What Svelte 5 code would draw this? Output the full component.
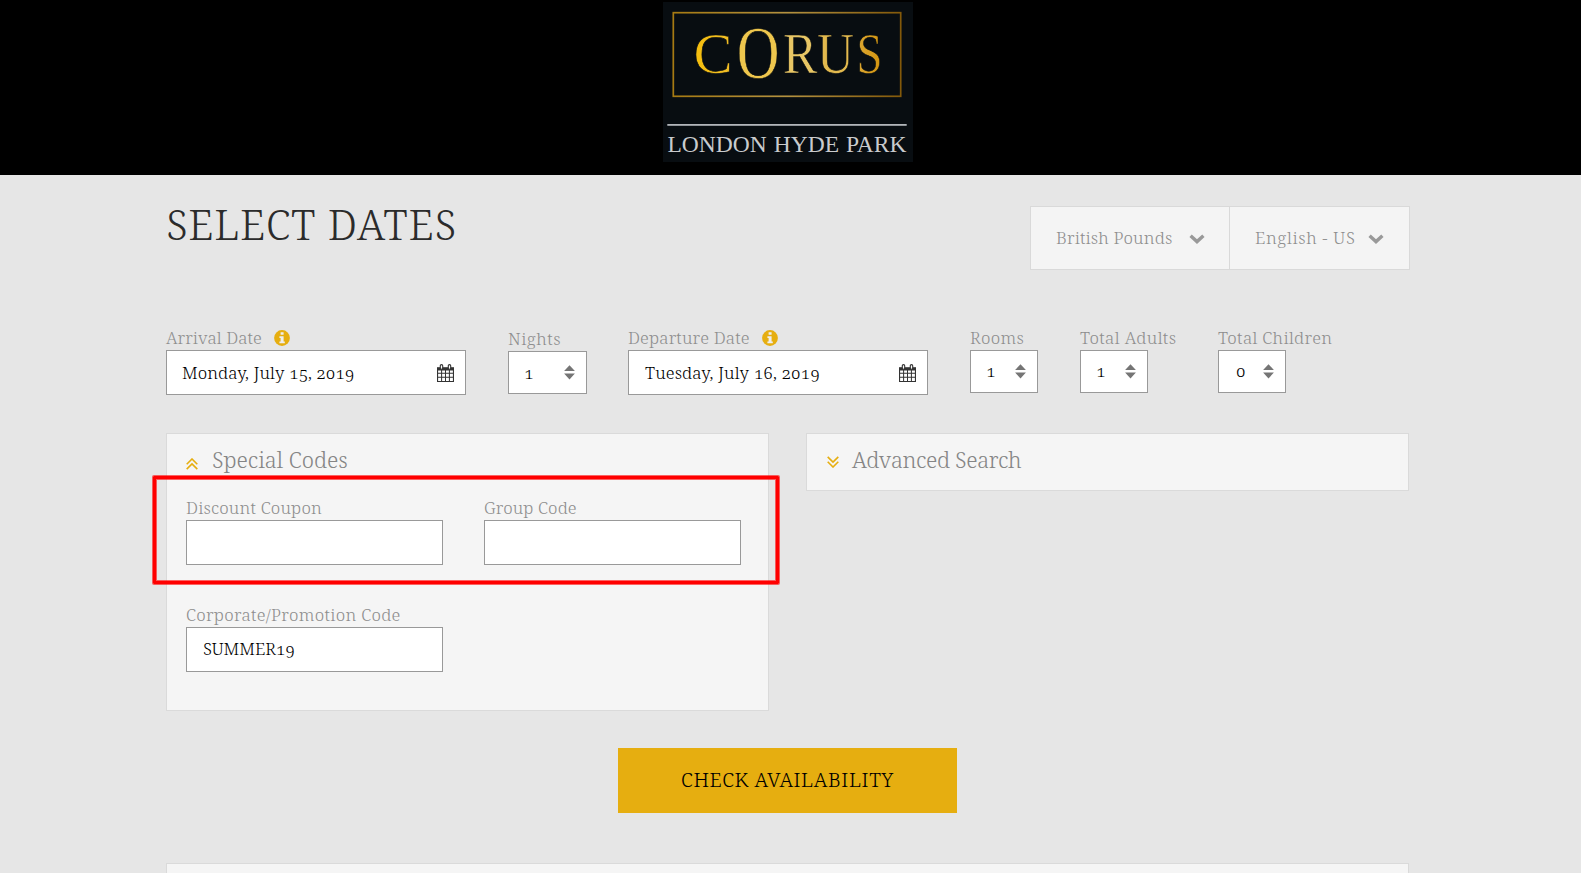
<script>
  const selectors = [
    { label: 'British Pounds', cls: 'currency' },
    { label: 'English - US', cls: 'language' }
  ];
  const fields = [
    { label: 'Arrival Date', value: 'Monday, July 15, 2019', kind: 'date', cls: 'arrival' },
    { label: 'Nights', value: '1', kind: 'step', cls: 'nights' },
    { label: 'Departure Date', value: 'Tuesday, July 16, 2019', kind: 'date', cls: 'departure' },
    { label: 'Rooms', value: '1', kind: 'step', cls: 'rooms' },
    { label: 'Total Adults', value: '1', kind: 'step', cls: 'adults' },
    { label: 'Total Children', value: '0', kind: 'step', cls: 'children' }
  ];
  const codes = [
    { label: 'Discount Coupon', value: '', cls: 'coupon' },
    { label: 'Group Code', value: '', cls: 'group' },
    { label: 'Corporate/Promotion Code', value: 'SUMMER19', cls: 'promo' }
  ];
</script>

<header>
  <svg class="logo" width="250" height="160" viewBox="0 0 250 160">
    <defs>
      <linearGradient id="frame">
        <stop offset="0" stop-color="#a67a12" />
        <stop offset=".5" stop-color="#b39140" />
        <stop offset="1" stop-color="#83590a" />
      </linearGradient>
      <linearGradient id="gold-c">
        <stop offset="0" stop-color="#f5be0c" />
        <stop offset="1" stop-color="#f0bd28" />
      </linearGradient>
      <linearGradient id="gold-s">
        <stop offset="0" stop-color="#dca834" />
        <stop offset="1" stop-color="#d3930c" />
      </linearGradient>
    </defs>
    <rect width="250" height="160" fill="#080d11" />
    <rect x="10.3" y="10.7" width="227.4" height="83.6" fill="none" stroke="url(#frame)" stroke-width="1.7" />
    <g class="brand" stroke="#080d11" stroke-width=".6">
      <text transform="translate(30.5 71) scale(1.03 1)" font-size="57" fill="url(#gold-c)">C</text>
      <text transform="translate(73.8 76.3) scale(.8 1)" font-size="74" fill="#eec64d">O</text>
      <text transform="translate(120 71) scale(.9 1)" font-size="57" fill="#e8c665">R</text>
      <text transform="translate(154 71) scale(.9 1)" font-size="57" fill="#e2b94e">U</text>
      <text transform="translate(193.5 71) scale(.82 1)" font-size="57" fill="url(#gold-s)">S</text>
    </g>
    <rect x="4.3" y="122" width="239.4" height="1.8" fill="#b1b5b9" />
    <text class="brand" x="4.5" y="150" font-size="23.5" word-spacing="1" fill="#c9cbcd" textLength="239" lengthAdjust="spacingAndGlyphs">LONDON HYDE PARK</text>
  </svg>
</header>

<main>
  <div class="top">
    <h1>SELECT DATES</h1>
    <div class="selectors">
      {#each selectors as s}
        <button class="selector {s.cls}">
          <span>{s.label}</span>
          <svg width="16" height="10" viewBox="0 0 16 10"><path d="M1.6 1.8 8 7.6l6.4-5.8" fill="none" stroke="#999" stroke-width="3.4" /></svg>
        </button>
      {/each}
    </div>
  </div>

  <div class="fields">
    {#each fields as f}
      <div class="field {f.cls}">
        <div class="label">
          <span>{f.label}</span>
          {#if f.kind === 'date'}
            <svg class="info" width="16" height="16" viewBox="0 0 16 16">
              <circle cx="8" cy="8" r="7.9" fill="#e6ae10" />
              <path d="M6.6 2.3h3v2.4h-3zM5.4 6.2h4.2v5.2h1.2v1.9H5.4v-1.9h1.2V8.1H5.4z" fill="#eee" />
            </svg>
          {/if}
        </div>
        <div class="box {f.kind}">
          <span>{f.value}</span>
          {#if f.kind === 'date'}
            <svg width="17" height="18" viewBox="0 0 17 18">
              <path d="M0 3.2h17V18H0z" fill="#333" />
              <path d="M1.1 6.4h3v2.4h-3zm4 0h2.9v2.4H5.1zm3.9 0h2.9v2.4H9zm3.9 0h3v2.4h-3zM1.1 9.8h3v2.9h-3zm4 0h2.9v2.9H5.1zm3.9 0h2.9v2.9H9zm3.9 0h3v2.9h-3zM1.1 13.7h3v3.2h-3zm4 0h2.9v3.2H5.1zm3.9 0h2.9v3.2H9zm3.9 0h3v3.2h-3z" fill="#fff" />
              <rect x="3.3" y=".6" width="2.4" height="4.6" rx="1.2" fill="#fff" stroke="#333" stroke-width="1.1" />
              <rect x="11.3" y=".6" width="2.4" height="4.6" rx="1.2" fill="#fff" stroke="#333" stroke-width="1.1" />
            </svg>
          {:else}
            <svg width="11" height="15" viewBox="0 0 11 15"><path d="M5.5.2 10.9 6H.1zM.1 8.6h10.8L5.5 14.4z" fill="#757575" /></svg>
          {/if}
        </div>
      </div>
    {/each}
  </div>

  <div class="panels">
    <section class="panel special">
      <h2>
        <svg width="12" height="12" viewBox="0 0 12 12"><path d="M.7 6.2 6 1l5.3 5.2M.7 11.1 6 5.9l5.3 5.2" /></svg>
        <span>Special Codes</span>
      </h2>
      <div class="codes">
        {#each codes as c}
          <div class="field {c.cls}">
            <div class="label"><span>{c.label}</span></div>
            <div class="box"><span>{c.value}</span></div>
          </div>
        {/each}
      </div>
      <div class="highlight"></div>
    </section>
    <section class="panel advanced">
      <h2>
        <svg width="12" height="12" viewBox="0 0 12 12"><path d="M.7.9 6 6.1 11.3.9M.7 5.8 6 11l5.3-5.2" /></svg>
        <span>Advanced Search</span>
      </h2>
    </section>
  </div>

  <button class="check">CHECK AVAILABILITY</button>
  <section class="panel results"></section>
</main>

<style>
  :global(body) {
    background: #e6e6e6;
    overflow: hidden;
  }
  :global(#app) {
    font-family: 'Noto Serif', 'DejaVu Serif Condensed', 'DejaVu Serif', serif;
    font-weight: 300;
    font-size: 17px;
    font-variant-numeric: oldstyle-nums;
  }
  header {
    height: 175px;
    background: #000;
    display: flex;
    justify-content: center;
    align-items: flex-start;
    padding: 2px 5px 0 0;
    box-sizing: border-box;
  }
  svg {
    display: block;
    flex: none;
  }
  .brand {
    font-family: 'Liberation Serif', serif;
    font-weight: 400;
  }
  main {
    height: 698px;
    padding: 0 172px 0 166px;
    box-sizing: border-box;
    overflow: hidden;
  }
  .top {
    height: 151px;
    display: flex;
    justify-content: space-between;
    align-items: flex-start;
  }
  h1 {
    margin: 22px 0 0;
    font-size: 41.5px;
    line-height: 54px;
    font-weight: 300;
    letter-spacing: 0.75px;
    color: #2b2b2b;
  }
  .selectors {
    display: flex;
    margin: 31px -1px 0 0;
    border: 1px solid #d9d9d9;
    background: #f4f4f4;
    height: 62px;
  }
  button {
    font: inherit;
    border: 0;
    border-radius: 0;
    background: none;
    margin: 0;
  }
  .selector {
    display: flex;
    align-items: center;
    justify-content: space-between;
    box-sizing: border-box;
    color: #8e8e8e;
    white-space: nowrap;
  }
  .selector span {
    margin-bottom: 2px;
  }
  .selector svg {
    margin-top: 2px;
  }
  .currency {
    width: 199px;
    padding: 0 24px 0 25px;
    border-right: 1px solid #d9d9d9;
    letter-spacing: 0.14px;
  }
  .language {
    width: 179px;
    padding: 0 25px;
    letter-spacing: 0.65px;
  }
  .fields {
    height: 107px;
    display: flex;
    align-items: flex-start;
    gap: 42px;
  }
  .label {
    display: flex;
    align-items: center;
    height: 24px;
    line-height: 24px;
    color: #8e8e8e;
    white-space: nowrap;
  }
  .info {
    margin-left: auto;
  }
  .box {
    display: flex;
    align-items: center;
    justify-content: space-between;
    box-sizing: border-box;
    height: 45px;
    padding: 0 11px 0 16px;
    border: 1px solid #999;
    background: #fff;
    color: #000;
    white-space: nowrap;
  }
  .date {
    width: 300px;
  }
  .date svg {
    margin-top: 1px;
  }
  .step {
    width: 68px;
    height: 43px;
    padding: 0 11px 0 15px;
  }
  .step span {
    margin-bottom: 2px;
  }
  .nights {
    margin: 1px -1px 0 0;
    width: 79px;
    letter-spacing: 0.5px;
  }
  .nights .step {
    width: 79px;
  }
  .nights .step span {
    margin-bottom: 1px;
  }
  .arrival .label {
    width: 123.5px;
    letter-spacing: 0.06px;
  }
  .arrival .box {
    padding-left: 15px;
    letter-spacing: 0.05px;
  }
  .departure .label {
    width: 149.5px;
    letter-spacing: 0.15px;
  }
  .departure .box {
    letter-spacing: 0.13px;
  }
  .rooms {
    letter-spacing: 0.3px;
  }
  .adults {
    width: 96px;
    letter-spacing: 0.38px;
  }
  .children {
    letter-spacing: 0.32px;
  }
  .children .box {
    padding-left: 17px;
  }
  .panels {
    height: 315px;
    display: flex;
    align-items: flex-start;
    justify-content: space-between;
  }
  .panel {
    box-sizing: border-box;
    border: 1px solid #dadada;
    background: #f5f5f5;
  }
  .special {
    position: relative;
    width: 603px;
    height: 278px;
    padding: 10px 19px;
  }
  .advanced {
    width: 603px;
    height: 58px;
    padding: 10px 20px;
  }
  h2 {
    display: flex;
    align-items: center;
    gap: 14px;
    margin: 0;
    height: 30px;
    line-height: 30px;
    font-size: 22px;
    font-weight: 300;
    color: #858585;
  }
  h2 svg {
    margin-top: 9px;
    fill: none;
    stroke: #e6ae10;
    stroke-width: 1.6;
  }
  .advanced h2 {
    gap: 13px;
    letter-spacing: -0.35px;
  }
  .advanced h2 svg {
    margin-top: 5px;
  }
  .codes {
    display: grid;
    grid-template-columns: 257px 257px;
    gap: 38px 41px;
    margin-top: 22px;
  }
  .coupon {
    letter-spacing: 0.18px;
  }
  .group {
    letter-spacing: 0.08px;
  }
  .promo {
    letter-spacing: 0.3px;
  }
  .promo .box {
    padding-bottom: 2px;
    letter-spacing: -0.05px;
  }
  .highlight {
    position: absolute;
    left: -14.5px;
    top: 42px;
    width: 626.5px;
    height: 108px;
    box-sizing: border-box;
    border: 3px solid #f00;
    border-radius: 1px;
    box-shadow: 0 0 0 1px rgba(255, 0, 0, 0.6), inset 0 0 0 1px rgba(255, 0, 0, 0.6);
  }
  .check {
    display: block;
    width: 339px;
    height: 65px;
    margin: 0 0 50px 452px;
    padding: 0 0 2px;
    background: #e6ae10;
    color: #000;
    font-size: 20px;
    letter-spacing: 0.6px;
    white-space: nowrap;
  }
  .results {
    height: 80px;
  }
</style>
